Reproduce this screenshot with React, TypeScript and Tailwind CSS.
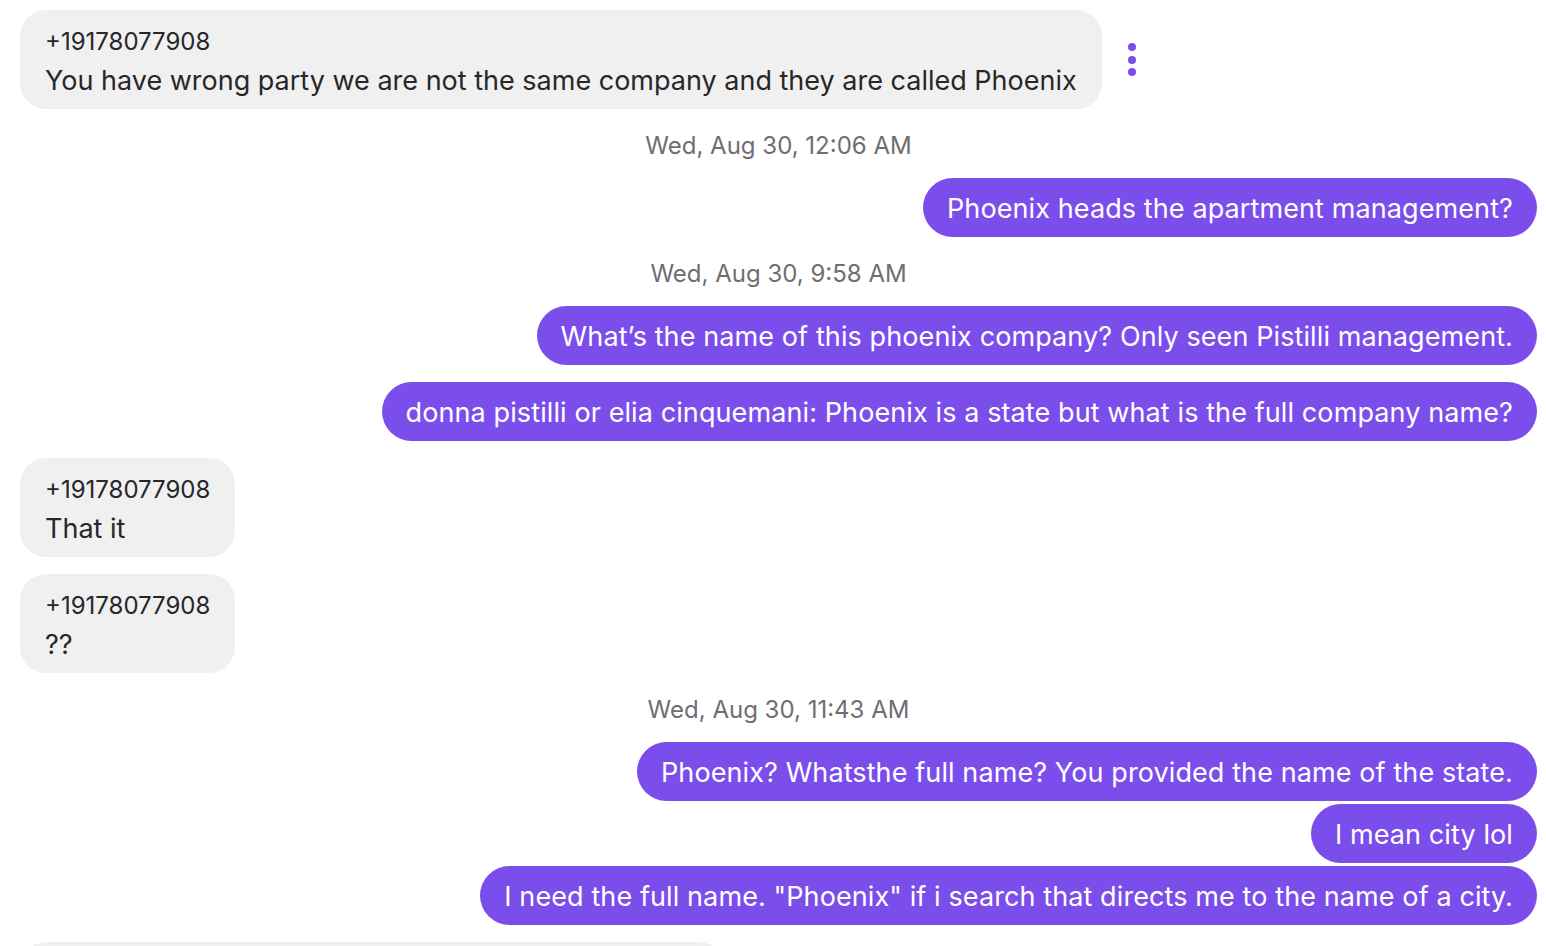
const PHONE = "+19178077908";

type Msg =
  | { kind: "in"; text: string; menu?: boolean; mt: string }
  | { kind: "out"; text: string; mt: string }
  | { kind: "time"; text: string };

const messages: Msg[] = [
  {
    kind: "in",
    text: "You have wrong party we are not the same company and they are called Phoenix",
    menu: true,
    mt: "mt-0",
  },
  { kind: "time", text: "Wed, Aug 30, 12:06 AM" },
  { kind: "out", text: "Phoenix heads the apartment management?", mt: "mt-0" },
  { kind: "time", text: "Wed, Aug 30, 9:58 AM" },
  {
    kind: "out",
    text: "What’s the name of this phoenix company? Only seen Pistilli management.",
    mt: "mt-0",
  },
  {
    kind: "out",
    text: "donna pistilli or elia cinquemani: Phoenix is a state but what is the full company name?",
    mt: "mt-[17px]",
  },
  { kind: "in", text: "That it", mt: "mt-[17px]" },
  { kind: "in", text: "??", mt: "mt-[17px]" },
  { kind: "time", text: "Wed, Aug 30, 11:43 AM" },
  {
    kind: "out",
    text: "Phoenix? Whatsthe full name? You provided the name of the state.",
    mt: "mt-0",
  },
  { kind: "out", text: "I mean city lol", mt: "mt-[3px]" },
  {
    kind: "out",
    text: 'I need the full name. "Phoenix" if i search that directs me to the name of a city.',
    mt: "mt-[3px]",
  },
];

const MoreDots = () => (
  <div className="flex flex-col items-center gap-[4.5px] px-2 py-1">
    <span className="block h-2 w-2 rounded-full bg-[#7b4eec]" />
    <span className="block h-2 w-2 rounded-full bg-[#7b4eec]" />
    <span className="block h-2 w-2 rounded-full bg-[#7b4eec]" />
  </div>
);

const Incoming = ({ text, menu, mt }: { text: string; menu?: boolean; mt: string }) => (
  <div className={`flex items-center gap-[18px] ${mt}`}>
    <div className="rounded-[26px] bg-[#f0f0f0] pl-[25px] pr-[25px] pt-[13px] pb-[8px] text-[#27272a]">
      <div className="text-[24px] leading-[38px]">{PHONE}</div>
      <div className="text-[27px] leading-[40px]">{text}</div>
    </div>
    {menu && <MoreDots />}
  </div>
);

const Outgoing = ({ text, mt }: { text: string; mt: string }) => (
  <div className={`flex justify-end ${mt}`}>
    <div className="flex h-[59px] items-center rounded-full bg-[#7b4eec] px-[24px] pt-[3px] text-[27px] tracking-[0.1px] text-white">
      {text}
    </div>
  </div>
);

const Timestamp = ({ text }: { text: string }) => (
  <div className="flex h-[69px] items-center justify-center pt-[4px] text-[24px] text-[#6e6e73]">
    {text}
  </div>
);

export default function App() {
  return (
    <div className="min-h-screen bg-white font-['Inter','Noto_Sans',sans-serif]">
      <div className="flex flex-col pl-[20px] pr-[9px] pt-[10px]">
        {messages.map((m, i) =>
          m.kind === "time" ? (
            <Timestamp key={i} text={m.text} />
          ) : m.kind === "in" ? (
            <Incoming key={i} text={m.text} menu={m.menu} mt={m.mt} />
          ) : (
            <Outgoing key={i} text={m.text} mt={m.mt} />
          )
        )}
        <div className="mt-[17px] flex">
          <div className="w-[705px] rounded-[26px] bg-[#f0f0f0] pl-[25px] pr-[25px] pt-[13px] pb-[8px] text-[#27272a]">
            <div className="text-[24px] leading-[38px]">{PHONE}</div>
            <div className="text-[27px] leading-[40px]">Phoenix</div>
          </div>
        </div>
      </div>
    </div>
  );
}
